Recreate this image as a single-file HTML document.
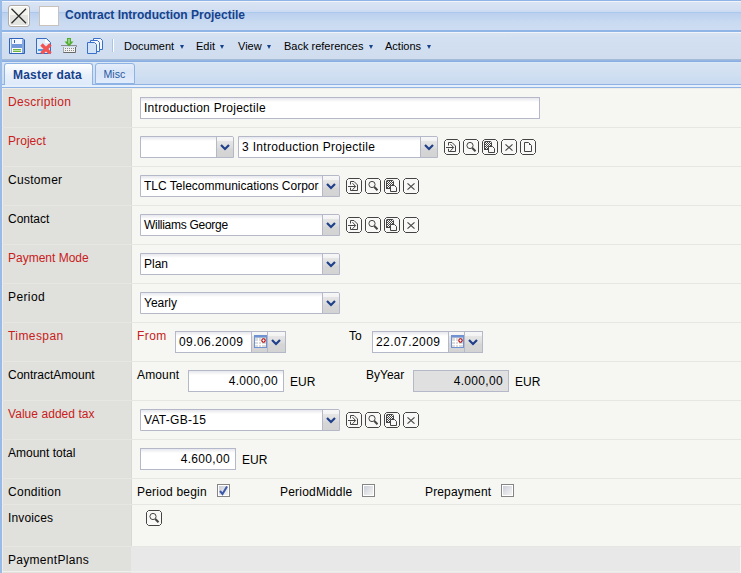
<!DOCTYPE html>
<html><head><meta charset="utf-8">
<style>
*{box-sizing:border-box;margin:0;padding:0}
html,body{width:741px;height:573px;overflow:hidden;background:#f6f7f2;font-family:"Liberation Sans",sans-serif;font-size:12px;color:#000}
.a{position:absolute}
#lb{left:0;top:0;width:2px;height:573px;background:#99bbe8;z-index:9}
#title{left:0;top:0;width:741px;height:89px;background:linear-gradient(#8fb4e6 0 1px,#f1f5fb 1px 2px,#d9e4f3 2px,#d3e0f2 10px,#cddcf2 10px 12px,#aac7ec 12px 13px,#bbd0ef 13px,#c8daf1 22px,#cddcf2 29px 30px,#8fb4e6 30px 32px,#f1f5fb 32px 33px,#d9e4f2 33px,#d3e0f1 38px,#d0ddef 59px,#a5bad5 59px 60px,#95b6e4 60px 61px,#88aee3 61px 62px,#dde8f5 62px 63px,#d8e4f3 63px,#cadbf0 84px,#8db2e3 84px 85px,#e6effc 85px 87px,#8fb3e4 87px 88px,#efefea 88px 89px)}
#closeb{left:8px;top:5px;width:22px;height:22px;border:1px solid #b0aba5;border-radius:3px;
 background:linear-gradient(#f5f5ef 0 9px,#e3e3df 9px);box-shadow:inset 0 0 0 1px #fff}
#sq{left:39px;top:6px;width:20px;height:20px;border:1px solid #c9c2ba;background:#fff}
#ttl{left:65px;top:8px;font-weight:bold;font-size:12px;color:#15428b;white-space:nowrap}
.mi{top:40px;font-size:11px;color:#000;white-space:nowrap}
.mi i{display:inline-block;width:0;height:0;border-left:2.5px solid transparent;border-right:2.5px solid transparent;border-top:4px solid #15428b;margin-left:5.5px;vertical-align:1px}
.tab{top:63px;height:22px;border:1px solid #8db2e3;border-bottom:none;border-radius:3px 3px 0 0;white-space:nowrap;padding-top:4px}
#t1{left:4px;width:89px;height:22px;background:linear-gradient(#fdfeff,#e6eefa 60%,#deebfb);color:#15428b;font-weight:bold;font-size:12px;letter-spacing:0.2px;padding-left:8px;z-index:2}
#t2{left:95px;width:40px;height:21px;border-bottom:1px solid #8db2e3;background:linear-gradient(#e4edfa,#d8e5f7 40%,#e0ebfb);color:#2756a2;font-size:10.6px;padding-left:7.5px;padding-top:3.5px}
#lc{left:0;top:88px;width:131px;height:485px;background:#e0e0dc}
#hl1{left:2px;top:88px;width:739px;height:1px;background:#eeede8}
#hl2{left:2px;top:88px;width:1px;height:485px;background:#eeede8}
#hl3{left:2px;top:571px;width:739px;height:1px;background:#efefec}
#lcl{left:131px;top:88px;width:1px;height:458px;background:#d9d9d3}
#pp{left:131px;top:547px;width:609px;height:26px;background:#e8e8e8}
.sep{left:0;width:741px;height:1px;background:#e6e7e3}
.lab{left:8px;font-size:12px;white-space:nowrap}
.red{color:#c82020}
.inp{height:22px;border:1px solid #b5b8c8;background:linear-gradient(#e6e8ee 0,#f3f3f5 2px,#fff 4px);white-space:nowrap;overflow:hidden;font-size:12px;padding:3px 0 0 3px}
.trg{position:absolute;top:0;width:17px;height:20px;border-left:1px solid #b5b8c8;background:linear-gradient(#f7f7f7 0,#f3f3f3 4px,#e6e6e6 4px,#dcdcdc 11px,#d6d6d6 12px,#d3d3d3 20px)}
.trg svg{position:absolute;left:3px;top:7px}
.btn{width:16px;height:16px}
.cb{width:13px;height:13px;border:1px solid #858585;background:linear-gradient(135deg,#c4c9d6,#e6e7ea 60%,#f6f6f4);box-shadow:inset 0 0 0 1px #fff}
.txt{font-size:12px;white-space:nowrap}
</style></head><body>
<div id="lb" class="a"></div>
<div id="title" class="a"></div>
<div id="closeb" class="a"><svg width="20" height="20" style="position:absolute;left:0;top:0"><path d="M2.5 2.8L17 17.2M17 2.8L2.5 17.2" stroke="#2c2c2c" stroke-width="1.3"/></svg></div>
<div id="sq" class="a"></div>
<div id="ttl" class="a">Contract Introduction Projectile</div>
<svg class="a" style="left:9px;top:38px" width="16" height="16" viewBox="0 0 16 16">
 <path d="M0.5 0.5H14L15.5 2V15.5H0.5Z" fill="#a9c4ee" stroke="#2f62b8"/>
 <rect x="1" y="1" width="1" height="14" fill="#e2ecfa"/>
 <rect x="2" y="1" width="1" height="14" fill="#86aae4"/>
 <rect x="13" y="2" width="2" height="13" fill="#86aae4"/>
 <rect x="3" y="1" width="10" height="5" fill="#f4f8fe"/>
 <rect x="5" y="2" width="1" height="3" fill="#2f62b8"/>
 <rect x="3" y="6" width="10" height="4" fill="#7399da"/>
 <rect x="3" y="10" width="10" height="5" fill="#fff"/>
 <rect x="4" y="11" width="8" height="1" fill="#6cb43c"/>
 <rect x="4" y="12" width="8" height="1" fill="#c6e2b4"/>
 <rect x="4" y="13" width="8" height="1" fill="#6cb43c"/>
</svg>
<svg class="a" style="left:36px;top:38px" width="16" height="16" viewBox="0 0 16 16">
 <path d="M0.5 0.5H10.5L14.5 4.5V15.5H0.5Z" fill="#d8e7f9" stroke="#3a6cc0"/>
 <path d="M1 1H10V5H14V15H1Z" fill="#dfeafa"/>
 <path d="M9.5 1V4.5H13.5" fill="#fff" stroke="#fff"/>
 <rect x="2" y="11" width="6" height="2" fill="#4aa0e8"/>
 <path d="M5.5 6.5L14.5 15.5M14.5 6.5L5.5 15.5" stroke="#f25454" stroke-width="3.4"/>
 <path d="M9.75 11.25h0.1" stroke="#f77" stroke-width="1.5"/>
</svg>
<svg class="a" style="left:61px;top:37px" width="17" height="17" viewBox="0 0 17 17">
 <path d="M2.5 10.5H14.5V15.5H2.5Z" fill="#f2f2f2" stroke="none"/>
 <path d="M2.5 10V15.5H14.5V10" fill="none" stroke="#6a6a6a"/>
 <path d="M2.5 10V15" fill="none" stroke="#aaa"/>
 <path d="M0 8.5H15.5V10" fill="none" stroke="#8c8c8c"/>
 <path d="M4 11h1v1h-1zM6 11h1v1h-1zM8 11h1v1h-1zM10 11h1v1h-1zM12 11h1v1h-1zM4 13h1v1h-1zM6 13h1v1h-1zM8 13h1v1h-1zM10 13h1v1h-1zM12 13h1v1h-1z" fill="#8a8a8a"/>
 <path d="M6 1H10V4.5H12.5L8 9.5L3.5 4.5H6Z" fill="#4fae2a"/>
 <path d="M7.3 2H8.7V6L8 7L7.3 6Z" fill="#b8dca8"/>
</svg>
<svg class="a" style="left:87px;top:38px" width="17" height="17" viewBox="0 0 17 17">
 <path d="M6.5 0.5H13.5L15.5 2.5V11.5H6.5Z" fill="#f4f8fe" stroke="#3a70c8"/>
 <path d="M3.5 2.5H10.5L12.5 4.5V13.5H3.5Z" fill="#f4f8fe" stroke="#3a70c8"/>
 <path d="M0.5 4.5H7.5L9.5 6.5V15.5H0.5Z" fill="#dce9f9" stroke="#3a70c8"/>
 <path d="M1 5H7V7H9V15H1Z" fill="#d4e4f8"/>
</svg>
<div class="a" style="left:112px;top:39px;width:2px;height:13px;background:linear-gradient(90deg,#a8c4ec 50%,#fff 50%)"></div>
<div class="a mi" style="left:124px">Document<i></i></div>
<div class="a mi" style="left:196px">Edit<i></i></div>
<div class="a mi" style="left:238px">View<i></i></div>
<div class="a mi" style="left:284px">Back references<i></i></div>
<div class="a mi" style="left:385px">Actions<i></i></div>
<div id="t1" class="a tab">Master data</div><div id="t2" class="a tab">Misc</div>
<div id="lc" class="a"></div><div id="lcl" class="a"></div><div id="pp" class="a"></div><div id="hl1" class="a"></div><div id="hl2" class="a"></div><div id="hl3" class="a"></div>
<div class="a sep" style="top:127px"></div>
<div class="a sep" style="top:166px"></div>
<div class="a sep" style="top:205px"></div>
<div class="a sep" style="top:244px"></div>
<div class="a sep" style="top:283px"></div>
<div class="a sep" style="top:322px"></div>
<div class="a sep" style="top:361px"></div>
<div class="a sep" style="top:400px"></div>
<div class="a sep" style="top:439px"></div>
<div class="a sep" style="top:478px"></div>
<div class="a sep" style="top:504px"></div>
<div class="a sep" style="top:546px"></div>
<div class="a lab red" style="top:95px;letter-spacing:0.28px">Description</div>
<div class="a lab red" style="top:134px;letter-spacing:0.07px">Project</div>
<div class="a lab" style="top:173px;letter-spacing:0.3px">Customer</div>
<div class="a lab" style="top:212px;letter-spacing:0px">Contact</div>
<div class="a lab red" style="top:251px;letter-spacing:0px">Payment Mode</div>
<div class="a lab" style="top:290px;letter-spacing:0.4px">Period</div>
<div class="a lab red" style="top:329px;letter-spacing:0.43px">Timespan</div>
<div class="a lab" style="top:368px;letter-spacing:0px">ContractAmount</div>
<div class="a lab red" style="top:407px;letter-spacing:0.05px">Value added tax</div>
<div class="a lab" style="top:446px;letter-spacing:0px">Amount total</div>
<div class="a lab" style="top:485px;letter-spacing:0.27px">Condition</div>
<div class="a lab" style="top:511px;letter-spacing:0.14px">Invoices</div>
<div class="a lab" style="top:553px;letter-spacing:0.3px">PaymentPlans</div>
<div class="a inp" style="left:140px;top:97px;width:400px;letter-spacing:0.28px">Introduction Projectile</div>
<div class="a inp" style="left:140px;top:136px;width:94px;border-top-right-radius:2px"><div class="trg" style="right:0"><svg width="10" height="7" viewBox="0 0 10 7"><path d="M1 1L5 5L9 1" fill="none" stroke="#1e3f8a" stroke-width="2.2"/></svg></div></div>

<div class="a inp" style="left:238px;top:136px;width:200px;letter-spacing:0.31px;border-top-right-radius:2px">3 Introduction Projectile<div class="trg" style="right:0"><svg width="10" height="7" viewBox="0 0 10 7"><path d="M1 1L5 5L9 1" fill="none" stroke="#1e3f8a" stroke-width="2.2"/></svg></div></div>

<div class="a inp" style="left:140px;top:175px;width:200px;border-top-right-radius:2px"><span style="display:block;width:175px;overflow:hidden">TLC Telecommunications Corporation</span><div class="trg" style="right:0"><svg width="10" height="7" viewBox="0 0 10 7"><path d="M1 1L5 5L9 1" fill="none" stroke="#1e3f8a" stroke-width="2.2"/></svg></div></div>

<div class="a inp" style="left:140px;top:214px;width:200px;letter-spacing:-0.28px;border-top-right-radius:2px">Williams George<div class="trg" style="right:0"><svg width="10" height="7" viewBox="0 0 10 7"><path d="M1 1L5 5L9 1" fill="none" stroke="#1e3f8a" stroke-width="2.2"/></svg></div></div>

<div class="a inp" style="left:140px;top:253px;width:200px;border-top-right-radius:2px">Plan<div class="trg" style="right:0"><svg width="10" height="7" viewBox="0 0 10 7"><path d="M1 1L5 5L9 1" fill="none" stroke="#1e3f8a" stroke-width="2.2"/></svg></div></div>

<div class="a inp" style="left:140px;top:292px;width:200px;border-top-right-radius:2px">Yearly<div class="trg" style="right:0"><svg width="10" height="7" viewBox="0 0 10 7"><path d="M1 1L5 5L9 1" fill="none" stroke="#1e3f8a" stroke-width="2.2"/></svg></div></div>

<div class="a txt red" style="left:137px;top:329px;letter-spacing:0.4px">From</div>
<div class="a inp" style="left:175px;top:331px;width:111px;letter-spacing:0.43px">09.06.2009<div class="trg" style="left:75px;border-right:1px solid #b5b8c8"><svg width="13" height="13" viewBox="0 0 13 13" style="left:2px;top:3px"><rect x="0.5" y="0.5" width="12" height="12" fill="#dcdcdc" stroke="#6e92d2"/><rect x="1" y="1" width="11" height="1.5" fill="#6e92d2"/><path d="M1 6.5H12M1 9.5H12M4.5 3V12M7.5 3V12" stroke="#fff"/><circle cx="9.5" cy="5.5" r="1.7" fill="#fff" stroke="#b00000" stroke-width="1.1"/></svg></div><div class="trg" style="right:0;border-left:none"><svg width="10" height="7" viewBox="0 0 10 7"><path d="M1 1L5 5L9 1" fill="none" stroke="#1e3f8a" stroke-width="2.2"/></svg></div></div>

<div class="a txt" style="left:349px;top:329px">To</div>
<div class="a inp" style="left:372px;top:331px;width:111px;letter-spacing:0.43px">22.07.2009<div class="trg" style="left:75px;border-right:1px solid #b5b8c8"><svg width="13" height="13" viewBox="0 0 13 13" style="left:2px;top:3px"><rect x="0.5" y="0.5" width="12" height="12" fill="#dcdcdc" stroke="#6e92d2"/><rect x="1" y="1" width="11" height="1.5" fill="#6e92d2"/><path d="M1 6.5H12M1 9.5H12M4.5 3V12M7.5 3V12" stroke="#fff"/><circle cx="9.5" cy="5.5" r="1.7" fill="#fff" stroke="#b00000" stroke-width="1.1"/></svg></div><div class="trg" style="right:0;border-left:none"><svg width="10" height="7" viewBox="0 0 10 7"><path d="M1 1L5 5L9 1" fill="none" stroke="#1e3f8a" stroke-width="2.2"/></svg></div></div>

<div class="a txt" style="left:137px;top:368px;letter-spacing:0.15px">Amount</div>
<div class="a inp" style="left:188px;top:370px;width:96px;text-align:right;padding-right:5px;letter-spacing:0.33px">4.000,00</div>

<div class="a txt" style="left:290px;top:375px">EUR</div>
<div class="a txt" style="left:366px;top:368px">ByYear</div>
<div class="a inp" style="left:413px;top:370px;width:96px;text-align:right;padding-right:5px;letter-spacing:0.33px;background:#e0e0e0">4.000,00</div>

<div class="a txt" style="left:515px;top:375px">EUR</div>
<div class="a inp" style="left:140px;top:409px;width:200px;letter-spacing:0.3px;border-top-right-radius:2px">VAT-GB-15<div class="trg" style="right:0"><svg width="10" height="7" viewBox="0 0 10 7"><path d="M1 1L5 5L9 1" fill="none" stroke="#1e3f8a" stroke-width="2.2"/></svg></div></div>

<div class="a inp" style="left:140px;top:448px;width:96px;text-align:right;padding-right:5px;letter-spacing:0.33px">4.600,00</div>

<div class="a txt" style="left:242px;top:453px">EUR</div>
<div class="a txt" style="left:137px;top:485px;letter-spacing:0.2px">Period begin</div>
<div class="a cb" style="left:217px;top:484px"></div>
<div class="a txt" style="left:280px;top:485px;letter-spacing:0.2px">PeriodMiddle</div>
<div class="a cb" style="left:362px;top:484px"></div>
<div class="a txt" style="left:425px;top:485px;letter-spacing:0.15px">Prepayment</div>
<div class="a cb" style="left:501px;top:484px"></div>
<svg class="a" style="left:217px;top:484px" width="13" height="13" viewBox="0 0 13 13"><path d="M3 7L5.5 10L10 2.5" fill="none" stroke="#3c58a8" stroke-width="2"/></svg>
<svg class="a" style="left:444px;top:139px" width="16" height="16" viewBox="0 0 16 16"><path d="M2.5 0.5H13.5L15.5 2.5V13.5L13.5 15.5H2.5L0.5 13.5V2.5Z" fill="#f8f8f6" stroke="#444"/><path d="M4.5 6.5V3.5H8L11.5 7V12.5H4.5V9.7" fill="none" stroke="#444"/><path d="M2 8.5H9.5M6.5 5.2L9.6 8.5L6.5 11.8" fill="none" stroke="#444"/></svg>
<svg class="a" style="left:463px;top:139px" width="16" height="16" viewBox="0 0 16 16"><path d="M2.5 0.5H13.5L15.5 2.5V13.5L13.5 15.5H2.5L0.5 13.5V2.5Z" fill="#f8f8f6" stroke="#444"/><circle cx="7" cy="6.5" r="3.1" fill="none" stroke="#444"/><path d="M9.3 9L12.5 12.3" stroke="#444" stroke-width="2"/></svg>
<svg class="a" style="left:482px;top:139px" width="16" height="16" viewBox="0 0 16 16"><path d="M2.5 0.5H13.5L15.5 2.5V13.5L13.5 15.5H2.5L0.5 13.5V2.5Z" fill="#f8f8f6" stroke="#444"/><path d="M2 3.5Q2 2 3.5 2H8.5L10 3.5V11H2Z" fill="#444"/><path d="M4 3h1v1h-1zM6 3h1v1h-1zM8 3h1v1h-1zM3 4h1v1h-1zM5 4h1v1h-1zM7 4h1v1h-1zM4 5h1v1h-1zM6 5h1v1h-1zM8 5h1v1h-1zM3 6h1v1h-1zM5 6h1v1h-1zM7 6h1v1h-1zM4 7h1v1h-1zM6 7h1v1h-1zM8 7h1v1h-1zM3 8h1v1h-1zM5 8h1v1h-1zM7 8h1v1h-1zM4 9h1v1h-1zM6 9h1v1h-1zM8 9h1v1h-1z" fill="#f8f8f6"/><path d="M6.5 7.5H10.5L12.5 9.5V13.5H6.5Z" fill="#f8f8f6" stroke="#444"/></svg>
<svg class="a" style="left:501px;top:139px" width="16" height="16" viewBox="0 0 16 16"><path d="M2.5 0.5H13.5L15.5 2.5V13.5L13.5 15.5H2.5L0.5 13.5V2.5Z" fill="#f8f8f6" stroke="#444"/><path d="M4.5 5.3L11.5 11.7M11.5 5.3L4.5 11.7" stroke="#444" stroke-width="1.15"/></svg>
<svg class="a" style="left:520px;top:139px" width="16" height="16" viewBox="0 0 16 16"><path d="M2.5 0.5H13.5L15.5 2.5V13.5L13.5 15.5H2.5L0.5 13.5V2.5Z" fill="#f8f8f6" stroke="#444"/><path d="M4.5 3.5H8.5L11.5 6.5V12.5H4.5Z" fill="none" stroke="#444"/><rect x="9" y="5" width="1" height="1" fill="#444"/></svg>

<svg class="a" style="left:346px;top:178px" width="16" height="16" viewBox="0 0 16 16"><path d="M2.5 0.5H13.5L15.5 2.5V13.5L13.5 15.5H2.5L0.5 13.5V2.5Z" fill="#f8f8f6" stroke="#444"/><path d="M4.5 6.5V3.5H8L11.5 7V12.5H4.5V9.7" fill="none" stroke="#444"/><path d="M2 8.5H9.5M6.5 5.2L9.6 8.5L6.5 11.8" fill="none" stroke="#444"/></svg>
<svg class="a" style="left:365px;top:178px" width="16" height="16" viewBox="0 0 16 16"><path d="M2.5 0.5H13.5L15.5 2.5V13.5L13.5 15.5H2.5L0.5 13.5V2.5Z" fill="#f8f8f6" stroke="#444"/><circle cx="7" cy="6.5" r="3.1" fill="none" stroke="#444"/><path d="M9.3 9L12.5 12.3" stroke="#444" stroke-width="2"/></svg>
<svg class="a" style="left:384px;top:178px" width="16" height="16" viewBox="0 0 16 16"><path d="M2.5 0.5H13.5L15.5 2.5V13.5L13.5 15.5H2.5L0.5 13.5V2.5Z" fill="#f8f8f6" stroke="#444"/><path d="M2 3.5Q2 2 3.5 2H8.5L10 3.5V11H2Z" fill="#444"/><path d="M4 3h1v1h-1zM6 3h1v1h-1zM8 3h1v1h-1zM3 4h1v1h-1zM5 4h1v1h-1zM7 4h1v1h-1zM4 5h1v1h-1zM6 5h1v1h-1zM8 5h1v1h-1zM3 6h1v1h-1zM5 6h1v1h-1zM7 6h1v1h-1zM4 7h1v1h-1zM6 7h1v1h-1zM8 7h1v1h-1zM3 8h1v1h-1zM5 8h1v1h-1zM7 8h1v1h-1zM4 9h1v1h-1zM6 9h1v1h-1zM8 9h1v1h-1z" fill="#f8f8f6"/><path d="M6.5 7.5H10.5L12.5 9.5V13.5H6.5Z" fill="#f8f8f6" stroke="#444"/></svg>
<svg class="a" style="left:403px;top:178px" width="16" height="16" viewBox="0 0 16 16"><path d="M2.5 0.5H13.5L15.5 2.5V13.5L13.5 15.5H2.5L0.5 13.5V2.5Z" fill="#f8f8f6" stroke="#444"/><path d="M4.5 5.3L11.5 11.7M11.5 5.3L4.5 11.7" stroke="#444" stroke-width="1.15"/></svg>

<svg class="a" style="left:346px;top:217px" width="16" height="16" viewBox="0 0 16 16"><path d="M2.5 0.5H13.5L15.5 2.5V13.5L13.5 15.5H2.5L0.5 13.5V2.5Z" fill="#f8f8f6" stroke="#444"/><path d="M4.5 6.5V3.5H8L11.5 7V12.5H4.5V9.7" fill="none" stroke="#444"/><path d="M2 8.5H9.5M6.5 5.2L9.6 8.5L6.5 11.8" fill="none" stroke="#444"/></svg>
<svg class="a" style="left:365px;top:217px" width="16" height="16" viewBox="0 0 16 16"><path d="M2.5 0.5H13.5L15.5 2.5V13.5L13.5 15.5H2.5L0.5 13.5V2.5Z" fill="#f8f8f6" stroke="#444"/><circle cx="7" cy="6.5" r="3.1" fill="none" stroke="#444"/><path d="M9.3 9L12.5 12.3" stroke="#444" stroke-width="2"/></svg>
<svg class="a" style="left:384px;top:217px" width="16" height="16" viewBox="0 0 16 16"><path d="M2.5 0.5H13.5L15.5 2.5V13.5L13.5 15.5H2.5L0.5 13.5V2.5Z" fill="#f8f8f6" stroke="#444"/><path d="M2 3.5Q2 2 3.5 2H8.5L10 3.5V11H2Z" fill="#444"/><path d="M4 3h1v1h-1zM6 3h1v1h-1zM8 3h1v1h-1zM3 4h1v1h-1zM5 4h1v1h-1zM7 4h1v1h-1zM4 5h1v1h-1zM6 5h1v1h-1zM8 5h1v1h-1zM3 6h1v1h-1zM5 6h1v1h-1zM7 6h1v1h-1zM4 7h1v1h-1zM6 7h1v1h-1zM8 7h1v1h-1zM3 8h1v1h-1zM5 8h1v1h-1zM7 8h1v1h-1zM4 9h1v1h-1zM6 9h1v1h-1zM8 9h1v1h-1z" fill="#f8f8f6"/><path d="M6.5 7.5H10.5L12.5 9.5V13.5H6.5Z" fill="#f8f8f6" stroke="#444"/></svg>
<svg class="a" style="left:403px;top:217px" width="16" height="16" viewBox="0 0 16 16"><path d="M2.5 0.5H13.5L15.5 2.5V13.5L13.5 15.5H2.5L0.5 13.5V2.5Z" fill="#f8f8f6" stroke="#444"/><path d="M4.5 5.3L11.5 11.7M11.5 5.3L4.5 11.7" stroke="#444" stroke-width="1.15"/></svg>

<svg class="a" style="left:346px;top:412px" width="16" height="16" viewBox="0 0 16 16"><path d="M2.5 0.5H13.5L15.5 2.5V13.5L13.5 15.5H2.5L0.5 13.5V2.5Z" fill="#f8f8f6" stroke="#444"/><path d="M4.5 6.5V3.5H8L11.5 7V12.5H4.5V9.7" fill="none" stroke="#444"/><path d="M2 8.5H9.5M6.5 5.2L9.6 8.5L6.5 11.8" fill="none" stroke="#444"/></svg>
<svg class="a" style="left:365px;top:412px" width="16" height="16" viewBox="0 0 16 16"><path d="M2.5 0.5H13.5L15.5 2.5V13.5L13.5 15.5H2.5L0.5 13.5V2.5Z" fill="#f8f8f6" stroke="#444"/><circle cx="7" cy="6.5" r="3.1" fill="none" stroke="#444"/><path d="M9.3 9L12.5 12.3" stroke="#444" stroke-width="2"/></svg>
<svg class="a" style="left:384px;top:412px" width="16" height="16" viewBox="0 0 16 16"><path d="M2.5 0.5H13.5L15.5 2.5V13.5L13.5 15.5H2.5L0.5 13.5V2.5Z" fill="#f8f8f6" stroke="#444"/><path d="M2 3.5Q2 2 3.5 2H8.5L10 3.5V11H2Z" fill="#444"/><path d="M4 3h1v1h-1zM6 3h1v1h-1zM8 3h1v1h-1zM3 4h1v1h-1zM5 4h1v1h-1zM7 4h1v1h-1zM4 5h1v1h-1zM6 5h1v1h-1zM8 5h1v1h-1zM3 6h1v1h-1zM5 6h1v1h-1zM7 6h1v1h-1zM4 7h1v1h-1zM6 7h1v1h-1zM8 7h1v1h-1zM3 8h1v1h-1zM5 8h1v1h-1zM7 8h1v1h-1zM4 9h1v1h-1zM6 9h1v1h-1zM8 9h1v1h-1z" fill="#f8f8f6"/><path d="M6.5 7.5H10.5L12.5 9.5V13.5H6.5Z" fill="#f8f8f6" stroke="#444"/></svg>
<svg class="a" style="left:403px;top:412px" width="16" height="16" viewBox="0 0 16 16"><path d="M2.5 0.5H13.5L15.5 2.5V13.5L13.5 15.5H2.5L0.5 13.5V2.5Z" fill="#f8f8f6" stroke="#444"/><path d="M4.5 5.3L11.5 11.7M11.5 5.3L4.5 11.7" stroke="#444" stroke-width="1.15"/></svg>

<svg class="a" style="left:146px;top:510px" width="16" height="16" viewBox="0 0 16 16"><path d="M2.5 0.5H13.5L15.5 2.5V13.5L13.5 15.5H2.5L0.5 13.5V2.5Z" fill="#f8f8f6" stroke="#444"/><circle cx="7" cy="6.5" r="3.1" fill="none" stroke="#444"/><path d="M9.3 9L12.5 12.3" stroke="#444" stroke-width="2"/></svg>

</body></html>
